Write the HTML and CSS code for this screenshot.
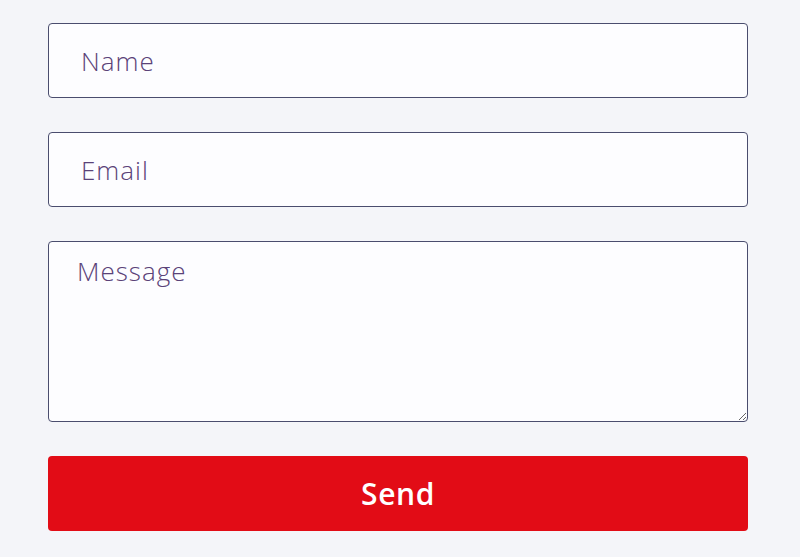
FILE: index.html
```html
<!DOCTYPE html>
<html>
<head>
<meta charset="utf-8">
<link rel="stylesheet" href="styles.css">
</head>
<body>
<form class="form">
  <input class="field" type="text" placeholder="Name">
  <input class="field" type="email" placeholder="Email">
  <textarea class="field area" placeholder="Message"></textarea>
  <button class="send" type="button">Send</button>
</form>
</body>
</html>
```
FILE: styles.css
```css
html, body {
  margin: 0;
  padding: 0;
  background: #f4f5f9;
}
body {
  width: 800px;
  height: 557px;
  overflow: hidden;
}
.form {
  display: flex;
  flex-direction: column;
  gap: 34px;
  width: 700px;
  margin: 23px 0 0 48px;
}
.field {
  box-sizing: border-box;
  width: 700px;
  height: 75px;
  border: 1.5px solid #4a4d6e;
  border-radius: 4px;
  background: #fdfdff;
  padding: 1px 0 0 32px;
  font-family: "Open Sans", sans-serif;
  font-weight: 300;
  font-size: 26px;
  letter-spacing: 1px;
  color: #4d3d6a;
  outline: none;
  margin: 0;
}
.field::placeholder {
  color: #5a4278;
  opacity: 1;
}
.area {
  height: 181px;
  padding: 11px 28px;
  resize: vertical;
  display: block;
}
.send {
  width: 700px;
  height: 75px;
  border: none;
  border-radius: 4px;
  background: #e20c16;
  color: #ffffff;
  font-family: "Open Sans", sans-serif;
  font-weight: 600;
  font-size: 30px;
  letter-spacing: 0.6px;
  padding: 0 0 1px 0;
  margin: 0;
}
```
